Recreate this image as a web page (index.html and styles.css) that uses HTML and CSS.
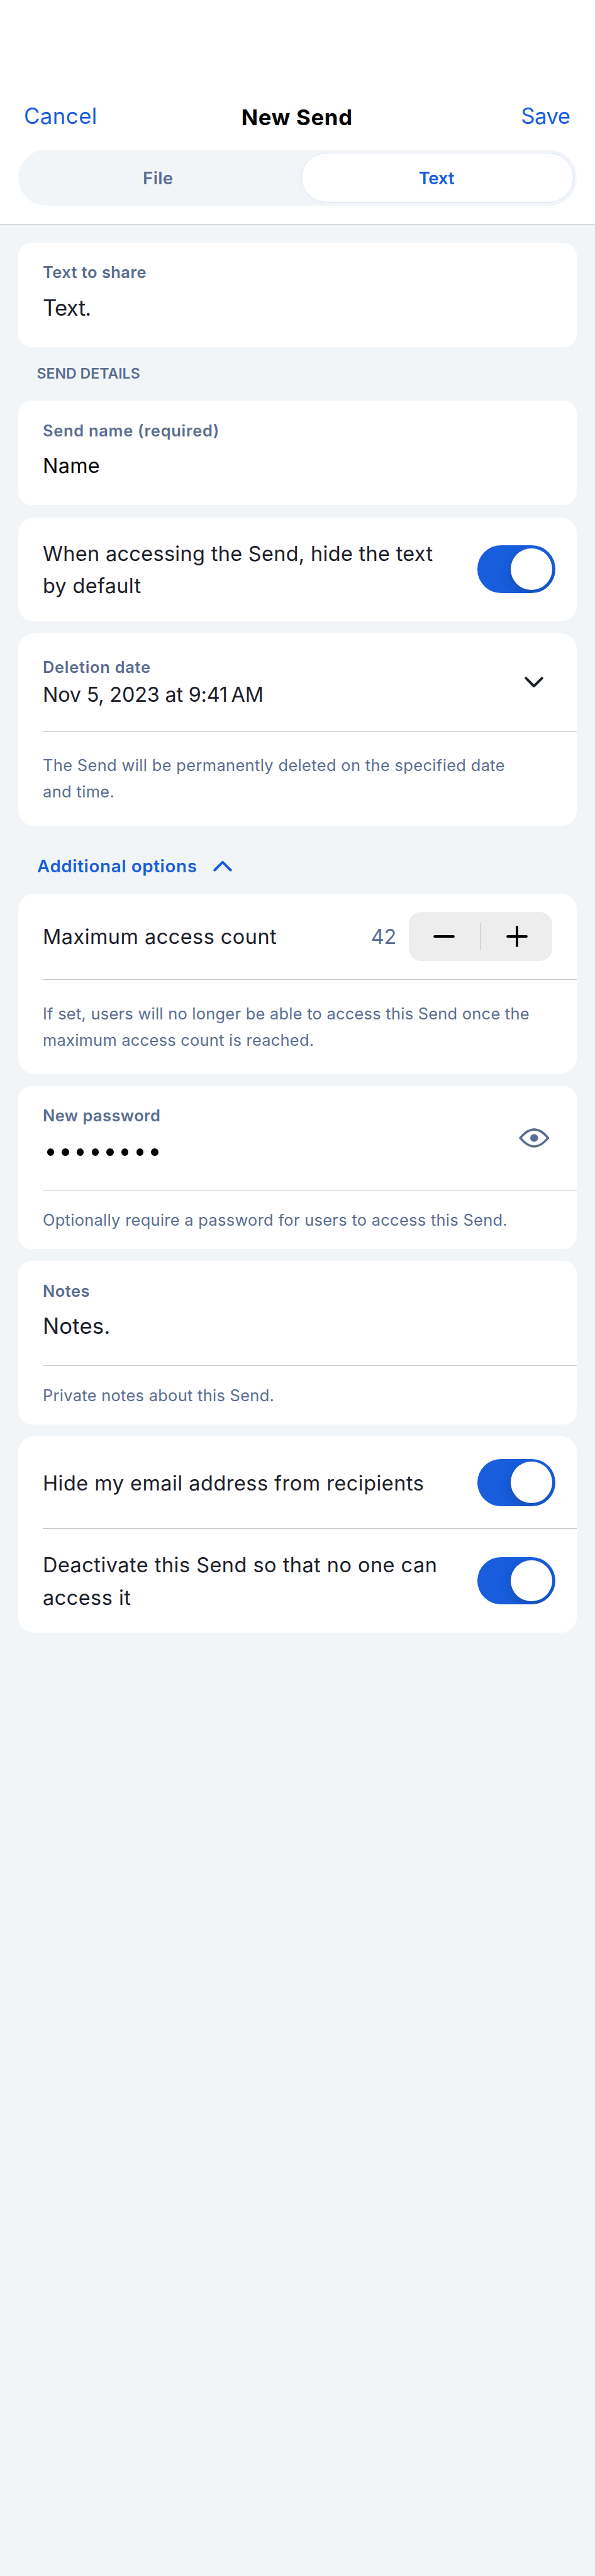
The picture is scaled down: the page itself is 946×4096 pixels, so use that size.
FILE: index.html
```html
<!DOCTYPE html>
<html lang="en">
<head>
<meta charset="utf-8">
<title>New Send</title>
<link rel="stylesheet" href="styles.css">
</head>
<body>
<header class="header">
  <nav class="nav">
    <a class="nav-link nav-cancel">Cancel</a>
    <h1 class="nav-title">New Send</h1>
    <a class="nav-link nav-save">Save</a>
  </nav>
  <div class="segment">
    <div class="segment-item">File</div>
    <div class="segment-item segment-active">Text</div>
  </div>
</header>
<main class="content">
  <section class="card card-field">
    <div class="field">
      <div class="label">Text to share</div>
      <div class="value value-large value-text">Text.</div>
    </div>
  </section>

  <h2 class="section-title">SEND DETAILS</h2>

  <section class="card card-field">
    <div class="field">
      <div class="label label-name">Send name (required)</div>
      <div class="value value-name">Name</div>
    </div>
  </section>

  <section class="card">
    <div class="row row-hide-text">
      <div class="row-text">When accessing the Send, hide the text<br>by default</div>
      <div class="toggle"><span class="knob"></span></div>
    </div>
  </section>

  <section class="card">
    <div class="row row-date">
      <div>
        <div class="label label-date">Deletion date</div>
        <div class="value-date">Nov 5, 2023 at 9:41&#8239;AM</div>
      </div>
      <svg class="chevron" viewBox="0 0 30 18"><path d="M2.3 2.3 15 15 27.7 2.3"/></svg>
    </div>
    <p class="help help-tall help-date">The Send will be permanently deleted on the specified date<br>and time.</p>
  </section>

  <div class="more">
    <span>Additional options</span>
    <svg class="chevron chevron-blue" viewBox="0 0 30 18"><path d="M2.3 15.5 15 2.8 27.7 15.5"/></svg>
  </div>

  <section class="card">
    <div class="row row-count">
      <div class="row-text row-text-count">Maximum access count</div>
      <div class="count">42</div>
      <div class="stepper">
        <svg class="stepper-icon" viewBox="0 0 34 34"><path d="M2 17H32"/></svg>
        <span class="stepper-divider"></span>
        <svg class="stepper-icon" viewBox="0 0 34 34"><path d="M2 17H32M17 2V32"/></svg>
      </div>
    </div>
    <p class="help help-tall">If set, users will no longer be able to access this Send once the<br>maximum access count is reached.</p>
  </section>

  <section class="card card-field">
    <div class="field field-password">
      <div>
        <div class="label label-password">New password</div>
        <div class="dots"><i></i><i></i><i></i><i></i><i></i><i></i><i></i><i></i></div>
      </div>
      <svg class="eye" viewBox="0 0 60 38"><path d="M2.6 19C8 12.5 17.5 2.3 30 2.3S52 12.5 57.4 19C52 25.5 42.5 35.7 30 35.7S8 25.5 2.6 19Z"/><circle cx="30" cy="19" r="7.7"/></svg>
    </div>
    <p class="help">Optionally require a password for users to access this Send.</p>
  </section>

  <section class="card card-field">
    <div class="field">
      <div class="label">Notes</div>
      <div class="value value-large">Notes.</div>
    </div>
    <p class="help">Private notes about this Send.</p>
  </section>

  <section class="card">
    <div class="row row-email">
      <div class="row-text row-text-wide">Hide my email address from recipients</div>
      <div class="toggle"><span class="knob"></span></div>
    </div>
    <div class="row row-deactivate">
      <div class="row-text row-text-wide">Deactivate this Send so that no one can<br>access it</div>
      <div class="toggle"><span class="knob"></span></div>
    </div>
  </section>
</main>
</body>
</html>
```
FILE: styles.css
```css
* { box-sizing: border-box; }

body {
  margin: 0;
  min-height: 4096px;
  background: #f2f5f8;
  color: #1b2029;
  font-family: Inter, "Liberation Sans", sans-serif;
  white-space: nowrap;
}

h1, h2, p { margin: 0; font-weight: inherit; }

/* Header */
.header {
  height: 357px;
  padding: 159.4px 29px 0;
  background: #fff;
  border-bottom: 1px solid #bdc3c9;
}
.nav {
  display: grid;
  grid-template-columns: 1fr auto 1fr;
  height: 78.4px;
  padding: 0 10.5px 0 9px;
  font-size: 34.7px;
  line-height: 50px;
}
.nav-link { color: #175ddc; }
.nav-cancel { letter-spacing: 0.5px; }
.nav-save { text-align: right; letter-spacing: -0.5px; }
.nav-title {
  padding-top: 1.7px;
  color: #000;
  font-size: 34.7px;
  font-weight: 700;
  letter-spacing: 0.75px;
}
.segment {
  display: grid;
  grid-template-columns: 444.6px 1fr;
  height: 89px;
  padding: 5px;
  border-radius: 44.5px;
  background: #f2f5f8;
}
.segment-item {
  display: flex;
  align-items: center;
  justify-content: center;
  padding: 1px 10px 0 0;
  color: #5a6d91;
  font-size: 27.7px;
  font-weight: 600;
  letter-spacing: 0.35px;
}
.segment-active {
  position: relative;
  padding-right: 3px;
  border: 1.5px solid #dbe5f8;
  border-radius: 39.5px;
  background: #fff;
  color: #175ddc;
  letter-spacing: -0.3px;
}
.segment-active::before {
  content: "";
  position: absolute;
  inset: 18px -2px;
  border: solid #dbe5f8;
  border-width: 0 1px;
}

/* Cards */
.content {
  display: flex;
  flex-direction: column;
  gap: 19.4px;
  padding: 28.8px 29px 0;
}
.card {
  overflow: hidden;
  border-radius: 25px;
  background: #fff;
}
.card-field { border-radius: 21px; }
.field {
  height: 165.8px;
  padding: 27.4px 39px 0;
}
.label {
  color: #5a6d91;
  font-size: 25.4px;
  font-weight: 600;
  line-height: 40px;
  letter-spacing: 0.48px;
}
.label-name, .label-date { letter-spacing: 0.74px; }
.label-password { letter-spacing: 0.45px; }
.value {
  margin-top: 10.4px;
  line-height: 50px;
  font-size: 32.4px;
}
.value-large { font-size: 34.7px; letter-spacing: 0.15px; }
.value-text { letter-spacing: -0.7px; }
.value-name { padding-top: 1.2px; color: #000; letter-spacing: 0.3px; }
.value-date { font-size: 32.4px; line-height: 48px; letter-spacing: -0.2px; }

.section-title {
  margin: 8.4px 30px 8.6px 29.5px;
  color: #5a6d91;
  font-size: 23.1px;
  font-weight: 600;
  line-height: 30px;
}

/* Rows */
.row {
  display: flex;
  align-items: center;
  justify-content: space-between;
  padding: 0 34.4px 0 39px;
}
.row-hide-text { height: 165px; }
.row-email { height: 145.8px; }
.row-deactivate { height: 165.6px; }
.row-date { height: 155.6px; padding-right: 53.2px; }
.row-count { height: 136.1px; padding-right: 39.2px; }
.row-text { padding-top: 2.4px; font-size: 32.4px; line-height: 51.2px; letter-spacing: 0.35px; }
.row-text-wide { letter-spacing: 0.51px; }
.row-text-count { flex: 1; padding-top: 1px; letter-spacing: 0.5px; }

.help {
  margin-left: 39px;
  padding: 25.9px 0 24.6px;
  border-top: 1px solid #c6c6c8;
  color: #5a6d91;
  font-size: 25.4px;
  line-height: 42.1px;
  letter-spacing: 0.31px;
}
.help-tall { padding: 32.7px 0 32.3px; letter-spacing: 0.27px; }
.help-date { letter-spacing: 0.375px; }
.row-deactivate {
  margin-left: 39px;
  padding-left: 0;
  border-top: 1px solid #c6c6c8;
}

/* Controls */
.toggle {
  position: relative;
  width: 123.6px;
  height: 75.2px;
  overflow: hidden;
  border-radius: 37.6px;
  background: #175ddc;
}
.knob {
  position: absolute;
  top: 4.8px;
  right: 4.8px;
  width: 65.6px;
  height: 65.6px;
  border-radius: 50%;
  background: #fff;
  box-shadow: 0 7px 18px rgba(0, 0, 0, 0.16);
}
.chevron {
  width: 30px;
  height: 18px;
  fill: none;
  stroke: #1b2029;
  stroke-width: 4;
  stroke-linecap: round;
  stroke-linejoin: round;
}
.chevron-blue { stroke: #175ddc; }
.more {
  display: flex;
  align-items: center;
  gap: 25px;
  height: 36px;
  margin: 26.9px 30px 6.7px;
  color: #175ddc;
  font-size: 27.7px;
  font-weight: 600;
  letter-spacing: 0.66px;
}
.count { margin-right: 19.5px; color: #5a6d91; font-size: 32.4px; }
.stepper {
  display: flex;
  align-items: center;
  justify-content: space-between;
  width: 228px;
  height: 77.6px;
  padding: 0 39px;
  border-radius: 20px;
  background: #ededee;
}
.stepper-icon {
  width: 34px;
  height: 34px;
  stroke: #000;
  stroke-width: 3.8;
  stroke-linecap: round;
}
.stepper-divider { width: 2.5px; height: 44px; border-radius: 2px; background: #d6d6d7; }
.field-password {
  display: flex;
  justify-content: space-between;
  padding-right: 43.7px;
}
.dots { display: flex; gap: 12.35px; padding: 32.3px 0 0 6.8px; }
.dots i { width: 11.3px; height: 11.6px; border-radius: 50%; background: #000; }
.eye { width: 48.6px; height: 30.8px; margin-top: 40.2px; fill: #5a6d91; }
.eye path { fill: none; stroke: #5a6d91; stroke-width: 4.4; stroke-linejoin: round; }
```
